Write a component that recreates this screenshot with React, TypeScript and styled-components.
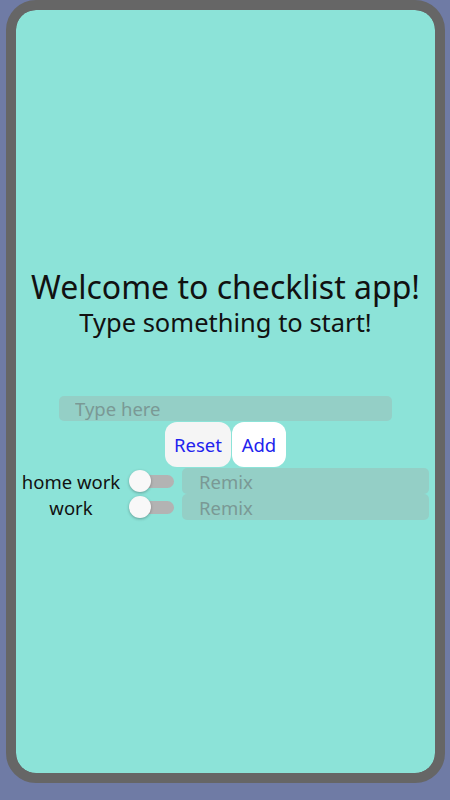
import React, { useState } from "react";
import styled, { createGlobalStyle } from "styled-components";

const GlobalStyle = createGlobalStyle`
  html, body {
    margin: 0;
    padding: 0;
    background-color: #6f7ba5;
    font-family: "Noto Sans", "Open Sans", sans-serif;
  }
`;

const Phone = styled.div`
  box-sizing: border-box;
  width: 439px;
  height: 783px;
  margin: 0 0 0 6px;
  border: 10px solid #666666;
  border-radius: 30px;
  background-color: #666666;
  overflow: hidden;
`;

const Screen = styled.main`
  height: 100%;
  background-color: #8ce3d8;
  border-radius: 20px;
  display: flex;
  flex-direction: column;
  align-items: center;
  padding-top: 257px;
  box-sizing: border-box;
`;

const Title = styled.h1`
  margin: 0;
  font-size: 32px;
  font-weight: 400;
  line-height: 40px;
  color: #111;
`;

const Subtitle = styled.h2`
  margin: 0;
  font-size: 25.5px;
  font-weight: 400;
  line-height: 30px;
  color: #111;
`;

const NewItem = styled.input`
  box-sizing: border-box;
  margin-top: 59px;
  width: 333px;
  height: 25px;
  border: none;
  outline: none;
  border-radius: 5px;
  background-color: #94cfc6;
  padding: 0 16px;
  font-family: inherit;
  font-size: 18.5px;
  color: #333;

  &::placeholder {
    color: #7a9995;
  }
`;

const Actions = styled.div`
  display: flex;
  gap: 1px;
  margin-top: 1px;
`;

const Button = styled.button<{ $tint?: boolean }>`
  min-width: 54px;
  height: 45px;
  padding: 0 9px;
  border: none;
  border-radius: 12px;
  background-color: ${(p) => (p.$tint ? "#f5f5f5" : "#ffffff")};
  color: #2222ee;
  font-family: inherit;
  font-size: 18.5px;
  cursor: pointer;
`;

const List = styled.ul`
  list-style: none;
  margin: 1px 0 0;
  padding: 0 6px 0 5px;
  align-self: stretch;
`;

const Row = styled.li`
  display: grid;
  grid-template-columns: 100px 61px 1fr;
  align-items: center;
  height: 26px;
`;

const Label = styled.span`
  text-align: center;
  font-size: 18.5px;
  color: #111;
  white-space: nowrap;
`;

const Toggle = styled.span`
  position: relative;
  display: block;
  width: 45px;
  height: 22px;
  margin-left: 8px;
`;

const Track = styled.span`
  position: absolute;
  left: 12px;
  top: 5px;
  width: 33px;
  height: 13px;
  border-radius: 7px;
  background-color: #b3b3b3;
`;

const Knob = styled.span`
  position: absolute;
  left: 0;
  top: 0;
  width: 22px;
  height: 22px;
  border-radius: 50%;
  background-color: #f8f8f8;
  box-shadow: 0 1px 3px rgba(0, 0, 0, 0.3);
`;

const ItemInput = styled.input`
  box-sizing: border-box;
  width: 100%;
  height: 26px;
  border: none;
  outline: none;
  border-radius: 5px;
  background-color: #94cfc6;
  padding: 0 17px;
  font-family: inherit;
  font-size: 18.5px;
  color: #333;

  &::placeholder {
    color: #7a9995;
  }
`;

const items = ["home work", "work"];

export default function App() {
  const [text, setText] = useState("");
  return (
    <>
      <GlobalStyle />
      <Phone>
        <Screen>
          <Title>Welcome to checklist app!</Title>
          <Subtitle>Type something to start!</Subtitle>
          <NewItem
            placeholder="Type here"
            value={text}
            onChange={(e) => setText(e.target.value)}
          />
          <Actions>
            <Button $tint>Reset</Button>
            <Button>Add</Button>
          </Actions>
          <List>
            {items.map((item) => (
              <Row key={item}>
                <Label>{item}</Label>
                <Toggle>
                  <Track />
                  <Knob />
                </Toggle>
                <ItemInput placeholder="Remix" />
              </Row>
            ))}
          </List>
        </Screen>
      </Phone>
    </>
  );
}
